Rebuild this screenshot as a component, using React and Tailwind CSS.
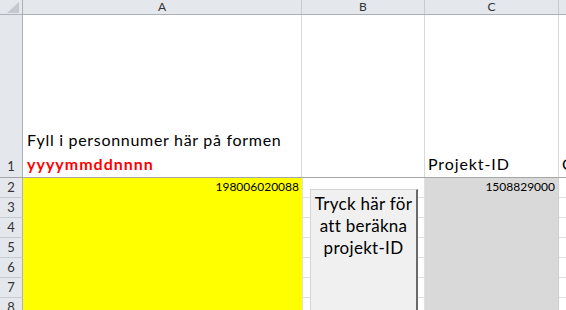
import React from "react";

const font = { fontFamily: "Lato, 'Open Sans', sans-serif" };

const rowNums = [2, 3, 4, 5, 6, 7, 8];

export default function App() {
  return (
    <div className="relative w-[566px] h-[310px] overflow-hidden bg-white text-[#222]" style={font}>
      {/* column header */}
      <div className="flex h-[15px] bg-[#e4e7eb] border-b border-[#aab1b9]">
        <div className="relative w-[23px] h-full border-r border-[#aab1b9] overflow-hidden">
          <svg width="22" height="14" className="absolute left-0 top-0">
            <polygon points="19,2 19,13 7,13" fill="#c4c9cf" />
          </svg>
        </div>
        <div className="w-[279px] h-full border-r border-[#c8ccd1] flex items-center justify-center text-[12px] leading-none text-[#333]">A</div>
        <div className="w-[123px] h-full border-r border-[#c8ccd1] flex items-center justify-center text-[12px] leading-none text-[#333]">B</div>
        <div className="w-[134px] h-full border-r border-[#c8ccd1] flex items-center justify-center text-[12px] leading-none text-[#333]">C</div>
        <div className="flex-1 h-full" />
      </div>

      {/* row 1 */}
      <div className="flex h-[163px] border-b border-[#a6a6a6]">
        <div className="w-[23px] h-full bg-[#e4e7eb] border-r border-[#aab1b9] flex items-end justify-center pb-[1px] text-[13px] leading-[20px] text-[#333]">1</div>
        <div className="w-[279px] h-full border-r border-[#d9d9d9] flex flex-col justify-end pl-[4px] pb-[1px] whitespace-nowrap">
          <div className="text-[16px] leading-[24px] tracking-[0.7px] text-black">Fyll i personnumer här på formen</div>
          <div className="text-[16px] leading-[24px] tracking-[1px] font-bold text-[#ff0000]">yyyymmddnnnn</div>
        </div>
        <div className="w-[123px] h-full border-r border-[#d9d9d9]" />
        <div className="w-[134px] h-full border-r border-[#d9d9d9] flex items-end pl-[3px] pb-[1px] whitespace-nowrap">
          <div className="text-[16px] leading-[24px] tracking-[0.9px] text-black">Projekt-ID</div>
        </div>
        <div className="flex-1 h-full overflow-hidden flex items-end pl-[3px] pb-[1px]">
          <div className="text-[16px] leading-[24px] text-black">C</div>
        </div>
      </div>

      {/* rows 2-8 */}
      {rowNums.map((n) => (
        <div key={n} className="flex h-[20px]">
          <div className="w-[23px] h-full bg-[#e4e7eb] border-r border-[#aab1b9] border-b border-b-[#c8ccd1] flex items-center justify-center text-[13px] leading-none text-[#333]">{n}</div>
          <div className="w-[279px] h-full bg-[#ffff00] flex items-start justify-end pr-[3px] pt-[2px] text-[12px] leading-[14px] text-black">
            {n === 2 ? "198006020088" : ""}
          </div>
          <div className="w-[123px] h-full border-l border-[#d9d9d9] border-r border-b border-[#e0e0e0]" />
          <div className="w-[134px] h-full bg-[#d9d9d9] border-r border-[#d0d0d0] flex items-start justify-end pr-[3px] pt-[2px] text-[12px] leading-[14px] text-black">
            {n === 2 ? "1508829000" : ""}
          </div>
          <div className="flex-1 h-full border-b border-[#e0e0e0]" />
        </div>
      ))}

      {/* floating button */}
      <div className="absolute left-[310px] top-[189px] w-[108px] h-[140px] bg-[#f0f0f0] border-t border-l border-[#d4d4d4] border-r-2 border-r-[#6a6a6a] flex flex-col items-center pt-[3px] text-[17px] leading-[22px] tracking-[0.3px] text-black text-center">
        <div>Tryck här för</div>
        <div>att beräkna</div>
        <div>projekt-ID</div>
      </div>
    </div>
  );
}
